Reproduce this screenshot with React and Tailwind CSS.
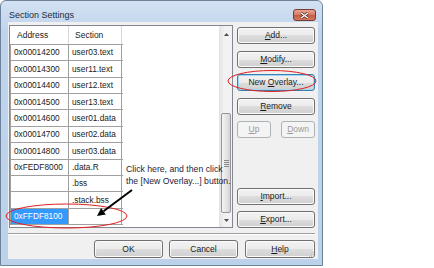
import React from 'react';

const rows = [
  ['0x00014200', 'user03.text'],
  ['0x00014300', 'user11.text'],
  ['0x00014400', 'user12.text'],
  ['0x00014500', 'user13.text'],
  ['0x00014600', 'user01.data'],
  ['0x00014700', 'user02.data'],
  ['0x00014800', 'user03.data'],
  ['0xFEDF8000', '.data.R'],
  ['', '.bss'],
  ['', '.stack.bss'],
  ['0xFFDF8100', '', true],
];

const btnBase =
  'flex items-center justify-center rounded-[3px] border text-[8.5px] leading-none';
const btnNormal =
  'border-[#707070] text-[#1a1a1a] bg-[linear-gradient(#f2f2f2,#ebebeb_50%,#dddddd_50%,#cfcfcf)] shadow-[inset_0_0_0_1px_#fbfbfb]';

const Btn = ({ children, className = '', variant = 'normal' }) => {
  let look = btnNormal;
  if (variant === 'focus')
    look =
      'border-[#3c7fb1] text-[#1a1a1a] bg-[linear-gradient(#f2f2f2,#ebebeb_50%,#dddddd_50%,#cfcfcf)] shadow-[inset_0_0_0_1px_#9fd7f4]';
  if (variant === 'disabled')
    look = 'border-[#adb2b5] text-[#9a9a9a] bg-[#f4f4f4]';
  return (
    <div className={`${btnBase} ${look} ${className}`}>
      <span>{children}</span>
    </div>
  );
};

const U = ({ children }) => <span className="underline underline-offset-[1px]">{children}</span>;

const ScrollBar = () => (
  <div className="flex w-[13px] flex-col border-l border-[#e3e3e3] bg-[linear-gradient(90deg,#e6e6e6,#f2f2f2_40%,#f2f2f2)]">
    <div className="flex h-[17px] items-center justify-center">
      <svg width="5" height="3" viewBox="0 0 5 3">
        <path d="M0 3 L2.5 0 L5 3 Z" fill="#4d4d4d" />
      </svg>
    </div>
    <div className="h-[70px]" />
    <div className="mx-[1px] flex h-[100px] flex-col items-center justify-center gap-[1px] rounded-[2px] border border-[#979797] bg-[linear-gradient(90deg,#f4f4f4,#e6e6e6_50%,#d4d4d4)]">
      {[0, 1, 2, 3].map((i) => (
        <div key={i} className="h-[1px] w-[5px] bg-[#8a8a8a]" />
      ))}
    </div>
    <div className="flex-1" />
    <div className="flex h-[14px] items-center justify-center">
      <svg width="5" height="3" viewBox="0 0 5 3">
        <path d="M0 0 L2.5 3 L5 0 Z" fill="#4d4d4d" />
      </svg>
    </div>
  </div>
);

const ListBox = () => (
  <div className="ml-[1px] flex h-[203px] w-[224px] border border-[#828790] bg-white">
    <div className="flex w-[209px] flex-col">
      <div className="flex h-[17.8px] shrink-0 items-center text-[8.5px] text-[#1a1a1a]">
        <div className="flex h-full w-[59px] items-center border-r border-[#d8d8d8] pl-[7px]">Address</div>
        <div className="flex h-full w-[53px] items-center border-r border-[#d8d8d8] pl-[6px]">Section</div>
      </div>
      <div className="w-[113px] border-t border-l border-[#a0a0a0]">
        {rows.map(([addr, sec, sel], i) => (
          <div key={i} className="flex h-[16.4px] border-b border-[#a0a0a0] text-[8.3px] leading-none">
            <div
              className={`flex w-[58px] items-center border-r border-[#a0a0a0] pl-[3px] ${
                sel ? 'bg-[#3399ff] text-white' : 'text-[#1a1a1a]'
              }`}
            >
              {addr}
            </div>
            <div className="flex w-[53px] items-center border-r border-[#a0a0a0] pl-[3px] text-[#1a1a1a]">{sec}</div>
          </div>
        ))}
      </div>
    </div>
    <ScrollBar />
  </div>
);

export default function App() {
  return (
    <div className="relative h-[268px] w-[434px] overflow-hidden bg-white font-['Liberation_Sans',Arial,sans-serif]">
      <div className="flex h-[266px] w-[323px] flex-col rounded-t-[6px] border border-[#6e8299] bg-[linear-gradient(#d3e2f3,#bfd4ec_30px,#bcd2eb)]">
        {/* title bar */}
        <div className="flex h-[21px] items-end justify-between pb-[1px] pl-[8px] pr-[6px]">
          <span className="mb-[1px] text-[9px] leading-none text-[#1b2a3c]">Section Settings</span>
          <div className="flex h-[12px] w-[23px] items-center justify-center rounded-[3px] border border-[#7a3a30] bg-[linear-gradient(#e8a493,#d27a66_50%,#c45a44_50%,#d07a5e)]">
            <svg width="9" height="7" viewBox="0 0 9 7">
              <path d="M1 1 L8 6 M8 1 L1 6" stroke="#4a2018" strokeWidth="2.6" />
              <path d="M1 1 L8 6 M8 1 L1 6" stroke="#ffffff" strokeWidth="1.4" />
            </svg>
          </div>
        </div>

        {/* client */}
        <div className="ml-[7px] mr-[4px] flex h-[237px] flex-col bg-[#f0f0f0] pt-[3px]">
          <div className="flex">
            <ListBox />
            <div className="ml-[4px] flex w-[78px] flex-col justify-between pt-[2px]">
              <div className="flex flex-col gap-[6.5px]">
                <Btn className="h-[17px]"><U>A</U>dd...</Btn>
                <Btn className="h-[17px]"><U>M</U>odify...</Btn>
                <Btn className="h-[17px]" variant="focus">New <U>O</U>verlay...</Btn>
                <Btn className="h-[17px]"><U>R</U>emove</Btn>
                <div className="flex justify-between">
                  <Btn className="h-[17px] w-[34px]" variant="disabled"><U>U</U>p</Btn>
                  <Btn className="h-[17px] w-[34px]" variant="disabled"><U>D</U>own</Btn>
                </div>
              </div>
              <div className="flex flex-col gap-[6.5px]">
                <Btn className="h-[17px]"><U>I</U>mport...</Btn>
                <Btn className="h-[17px]"><U>E</U>xport...</Btn>
              </div>
            </div>
          </div>

          <div className="mr-[3px] mt-[5px] h-[2px] border-t border-b border-t-[#a0a0a0] border-b-white" />

          <div className="mt-[5px] flex h-[18px] justify-end pr-[3px]">
            <Btn className="h-[18px] w-[69px]">OK</Btn>
            <Btn className="ml-[6px] h-[18px] w-[69px]">Cancel</Btn>
            <Btn className="ml-[7px] h-[18px] w-[70px]"><U>H</U>elp</Btn>
          </div>
        </div>
      </div>

      {/* annotation */}
      <div className="absolute left-[126px] top-[163px] text-[8.7px] leading-[12px] text-[#1c1c3c]">
        <div>Click here, and then click</div>
        <div>the [New Overlay...] button.</div>
      </div>

      <svg className="pointer-events-none absolute left-0 top-0" width="434" height="268" viewBox="0 0 434 268">
        <ellipse cx="66.5" cy="216" rx="60.5" ry="12" fill="none" stroke="#e02020" strokeWidth="1" />
        <ellipse cx="272" cy="81" rx="44" ry="10.5" fill="none" stroke="#e02020" strokeWidth="1" />
        <line x1="132" y1="190" x2="103.5" y2="211.3" stroke="#000" strokeWidth="2" />
        <path d="M97 216 L105.8 214.5 L101.1 208 Z" fill="#000" />
        <g fill="#b8b8b8">
          <rect x="313" y="252" width="1" height="1" />
          <rect x="311" y="254" width="1" height="1" />
          <rect x="313" y="254" width="1" height="1" />
          <rect x="309" y="256" width="1" height="1" />
          <rect x="311" y="256" width="1" height="1" />
          <rect x="313" y="256" width="1" height="1" />
        </g>
      </svg>
    </div>
  );
}
